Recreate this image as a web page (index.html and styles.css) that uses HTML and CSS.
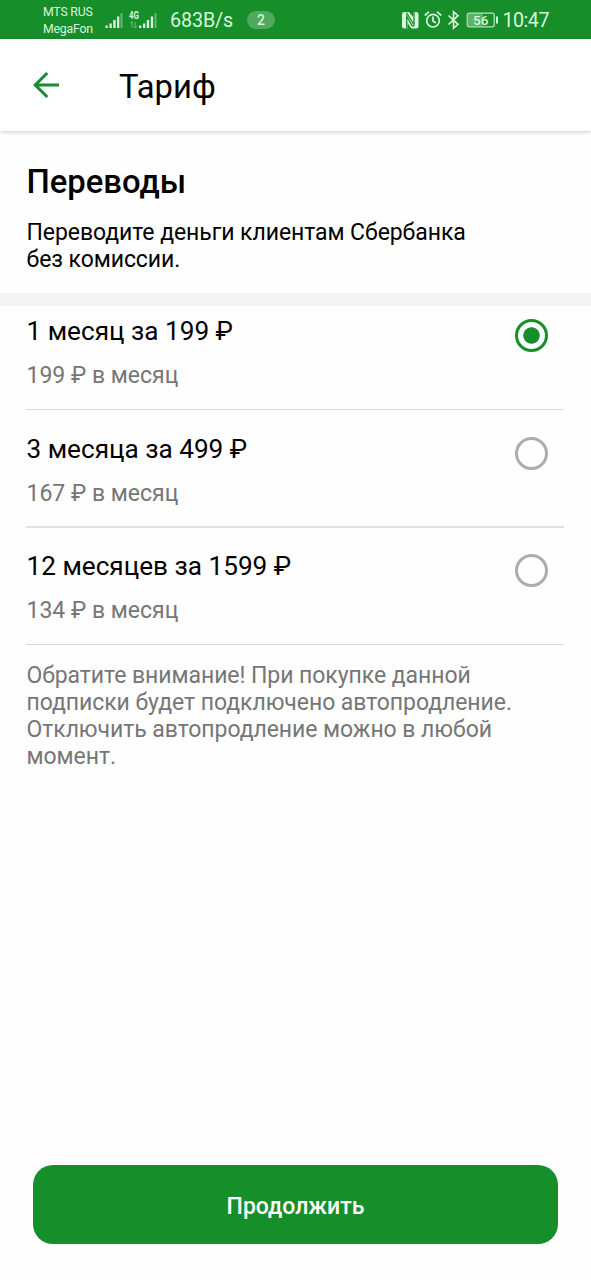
FILE: index.html
```html
<!DOCTYPE html>
<html lang="ru">
<head>
<meta charset="utf-8">
<meta name="viewport" content="width=device-width">
<title>Тариф</title>
<link rel="stylesheet" href="styles.css">
</head>
<body>
<div class="screen">
  <div class="status">
    <div class="carriers"><span>MTS RUS</span><span>MegaFon</span></div>
    <svg class="signal" width="54" height="22" viewBox="0 0 54 22" fill="#d9f5dc">
      <path d="M1.500 15.500h2.300v2.500h-2.300zM5.500 13.500h2.300v4.500h-2.300zM9.300 10h2.300v8h-2.300zM13 6.500h2.300v11.500h-2.300z"/>
      <path d="M16.500 3h2v15h-2zM50.500 3h2v15h-2z" opacity=".4"/>
      <path d="M35 15.500h2.300v2.500h-2.300zM39 13.500h2.300v4.500h-2.300zM42.800 10h2.300v8h-2.300zM46.800 6.500h2.300v11.500h-2.300z"/>
      <text class="net" x="25" y="8.800" textLength="10" lengthAdjust="spacingAndGlyphs">4G</text>
      <path d="M28 17.500v-6l-2 2M31 12v6l2-2" fill="none" stroke="#d9f5dc" opacity=".45"/>
    </svg>
    <span class="speed">683B/s</span>
    <span class="count">2</span>
    <div class="tray">
      <svg width="18" height="20" viewBox="0 0 18 20"><rect x="1" y="2" width="16.500" height="16.500" rx="2.500" fill="#d9f5dc"/><path d="M5.700 18.500V6.300L11 15.500Q13 17 13 14.500V2M5.500 2.500 12.800 14.500" fill="none" stroke="#168f2b" stroke-width="1.300"/><path d="M7.500 1.500h4.700v5.500zM6.600 19v-6l4 6z" fill="#168f2b"/></svg>
      <svg width="18" height="20" viewBox="0 0 18 20" fill="none" stroke="#d9f5dc" stroke-width="1.700" stroke-linecap="round"><circle cx="9" cy="10.700" r="6.300"/><path d="M9 7.200v3.800l2.200 1.500M1.300 5 4.500 2.200M16.700 5 13.500 2.200"/></svg>
      <svg width="13" height="20" viewBox="0 0 13 20" fill="none" stroke="#d9f5dc" stroke-width="1.600"><path d="M1.500 5.500 11 14.300 6.500 18.200V1.800L11 5.700 1.500 14.500"/></svg>
      <svg width="34" height="20" viewBox="0 0 34 20"><path d="M3 4h15v12h-15z" fill="#d9f5dc" opacity=".35"/><rect x="2.200" y="3.200" width="27" height="13.600" rx="2" fill="none" stroke="#d9f5dc" stroke-width="1.200" opacity=".85"/><path d="M31 6.500h2v7h-2z" fill="#d9f5dc"/><text class="battery" x="15.800" y="14.600" text-anchor="middle">56</text></svg>
      <span class="clock">10:47</span>
    </div>
  </div>
  <header class="appbar">
    <svg width="30" height="30" viewBox="0 0 30 30" fill="none" stroke="#1a8a35" stroke-width="3"><path d="M29 15H5M17.300 3 5.200 15 17.300 27"/></svg>
    <h1 class="title">Тариф</h1>
  </header>
  <section class="intro">
    <h2 class="heading">Переводы</h2>
    <p class="lead">Переводите деньги клиентам Сбербанка<br>без комиссии.</p>
  </section>
  <main class="plans">
    <div class="plan">
      <div><div class="name">1 месяц за 199 ₽</div><div class="price">199 ₽ в месяц</div></div>
      <span class="radio checked"></span>
    </div>
    <div class="plan">
      <div><div class="name">3 месяца за 499 ₽</div><div class="price">167 ₽ в месяц</div></div>
      <span class="radio"></span>
    </div>
    <div class="plan">
      <div><div class="name">12 месяцев за 1599 ₽</div><div class="price">134 ₽ в месяц</div></div>
      <span class="radio"></span>
    </div>
    <p class="note">Обратите внимание! При покупке данной<br>подписки будет подключено автопродление.<br>Отключить автопродление можно в любой<br>момент.</p>
  </main>
  <button class="continue">Продолжить</button>
</div>
</body>
</html>
```
FILE: styles.css
```css
* { box-sizing: border-box; margin: 0; }
body { font-family: Roboto, "Noto Sans", sans-serif; background: #fff; color: #000; }
.screen { height: 1280px; display: flex; flex-direction: column; background: #fefefe; }
.status { height: 39px; flex: none; background: #168f2b; color: #d9f5dc; display: flex; align-items: center; padding: 0 42px 0 43px; }
.carriers { display: flex; flex-direction: column; font-size: 12.300px; line-height: 17px; width: 61px; padding-top: 2px; letter-spacing: -.2px; white-space: nowrap; }
.signal { margin-top: 2px; }
.net { font-size: 10px; font-weight: 700; }
.speed { font-size: 19.700px; letter-spacing: -.1px; margin-left: 12px; width: 65px; padding-top: 2px; }
.count { margin-left: 12px; width: 28px; height: 18px; border-radius: 9px; background: #4fa95e; font-size: 14px; font-weight: 500; line-height: 18px; text-align: center; }
.tray { margin-left: auto; display: flex; align-items: center; gap: 5px; }
.battery { font-size: 13.500px; font-weight: 500; fill: #d9f5dc; }
.clock { font-size: 19.700px; letter-spacing: -.5px; margin-left: -2px; padding-top: 1px; }
.appbar { height: 92px; flex: none; display: flex; align-items: center; padding-left: 30px; background: #fff; box-shadow: 0 1px 4px rgba(0,0,0,.2); }
.title { font-size: 32.800px; font-weight: 400; line-height: 40px; margin: 3px 0 0 59px; }
.intro { height: 175px; flex: none; padding: 31px 26.500px 0; border-bottom: 13px solid #f3f3f3; }
.heading { font-size: 32.800px; font-weight: 500; line-height: 40px; }
.lead { font-size: 23px; letter-spacing: -.07px; line-height: 27px; margin-top: 17px; }
.plans { padding: 0 27px 0 26px; }
.plan { height: 118px; display: flex; justify-content: space-between; border-bottom: 1px solid #d9d9d9; padding: 14px 16px 0 .5px; }
.plan:first-child { height: 104px; padding-top: 0; }
.plan:nth-child(2) { border-bottom: 2px solid #e0e0e0; }
.plan:nth-child(3) { height: 117px; padding-top: 13px; }
.name { font-size: 26.170px; line-height: 32px; margin-top: 9px; }
.price { font-size: 23px; line-height: 28px; margin-top: 15px; color: #767676; }
.radio { width: 33px; height: 33px; margin-top: 13px; border: 3.500px solid #adadad; border-radius: 50%; }
.checked { border-color: #168f2b; background: radial-gradient(circle, #168f2b 7.800px, transparent 8.600px); }
.note { font-size: 23px; letter-spacing: -.06px; line-height: 27px; color: #767676; margin: 17px 0 0 .5px; }
.continue { margin: auto 33px 36px; height: 79px; flex: none; border: 0; border-radius: 20px; background: #168f2b; color: #fff; font: 500 23px Roboto, sans-serif; padding: 3px 0 0; }
```
